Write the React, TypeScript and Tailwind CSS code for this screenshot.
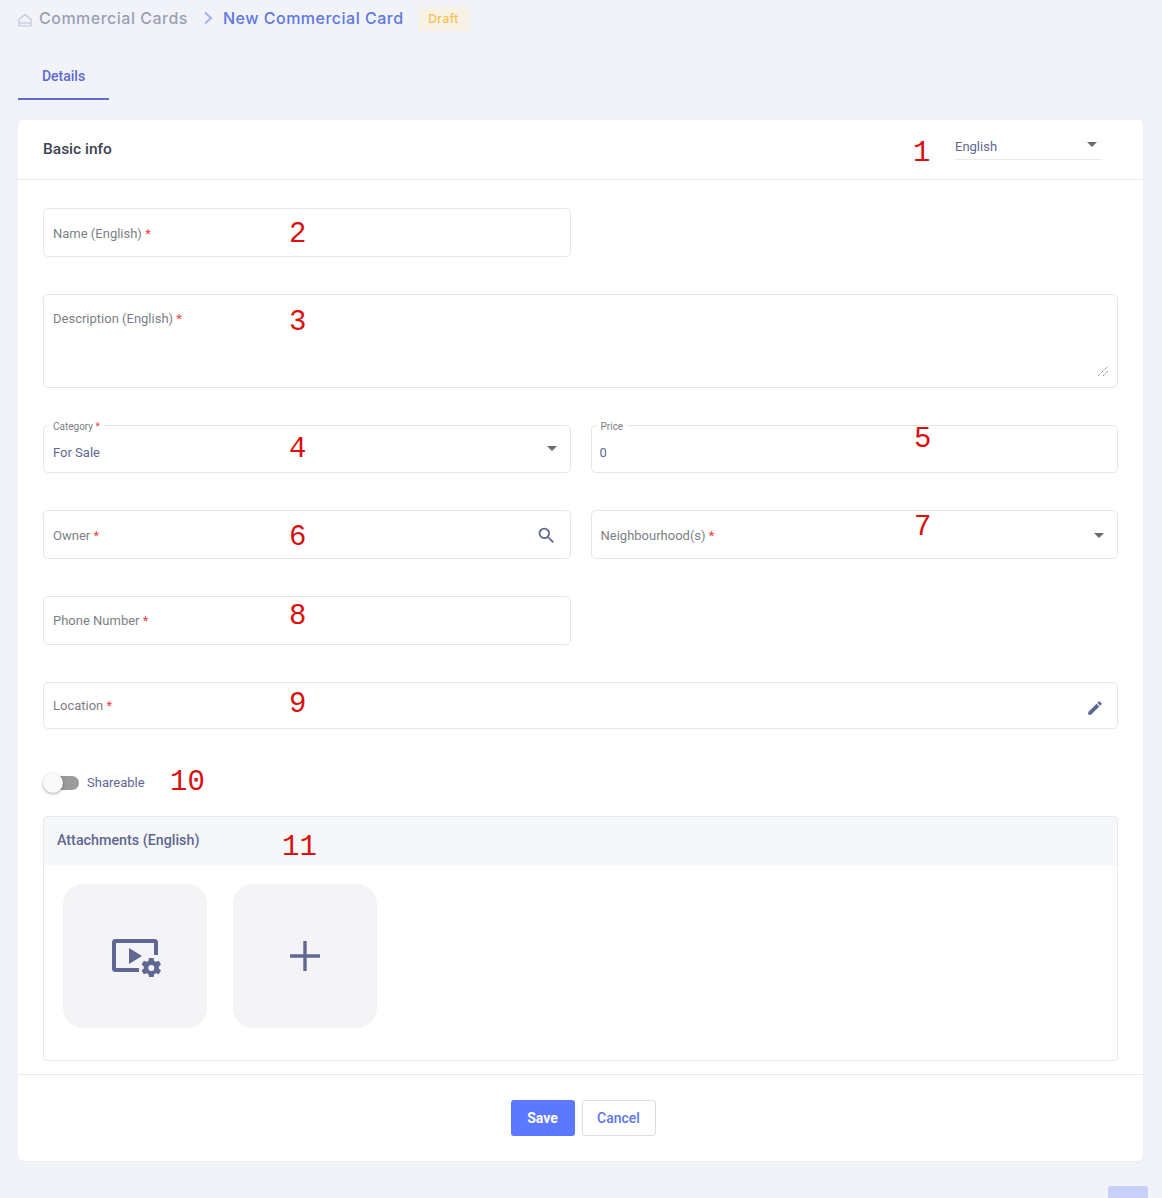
import { ReactNode } from "react";

const roboto = "font-['Roboto',sans-serif]";

function Req() {
  return <span className="text-[#f0413d]"> *</span>;
}

function Note({ children, className }: { children: ReactNode; className: string }) {
  return (
    <span className={`absolute font-['Liberation_Mono',monospace] text-[29px] leading-none text-[#d9100f] ${className}`}>
      {children}
    </span>
  );
}

function Caret({ className }: { className?: string }) {
  return <span className={`border-x-[5.5px] border-t-[5.5px] border-x-transparent border-t-[#6b6b6b] ${className}`} />;
}

function Field({ className, label, children }: { className: string; label: ReactNode; children?: ReactNode }) {
  return (
    <div className={`flex items-center justify-between rounded-[5px] border border-[#e5e6eb] pl-[9px] ${className}`}>
      <span className="text-[13px] text-[#7d7f86]">{label}</span>
      {children}
    </div>
  );
}

function FloatField({ className, label, value, children }: { className: string; label: ReactNode; value: string; children?: ReactNode }) {
  return (
    <div className={`relative flex h-12 items-center justify-between rounded-[5px] border border-[#e5e6eb] pl-[9px] ${className}`}>
      <span className="absolute -top-[6px] left-[5px] bg-white px-1 text-[10px] leading-[13px] text-[#7d7f86]">{label}</span>
      <span className="mt-[7px] text-[13px] text-[#5f6792]">{value}</span>
      {children}
    </div>
  );
}

export default function App() {
  return (
    <div className={`relative h-[1198px] w-full overflow-hidden bg-[#f1f3f9] px-[18px] ${roboto}`}>
      {/* Breadcrumb */}
      <div className="flex h-[38px] items-center font-['Inter',sans-serif] tracking-[0.5px]">
        <svg width="14" height="14" viewBox="0 0 14 14" fill="none" stroke="#c3c8e2" strokeWidth="1.2" className="mt-0.5">
          <path d="M1 6.2 7 1.5l6 4.7V13H1z" />
          <path d="M1 10h12" />
        </svg>
        <span className="mb-0.5 ml-[7px] text-base font-medium text-[#9a9fb4]">Commercial Cards</span>
        <svg width="12" height="14" viewBox="0 0 12 14" fill="none" stroke="#a6b3f2" strokeWidth="2" className="mb-0.5 ml-[15px]">
          <path d="m2 1.5 6 5.5-6 5.5" />
        </svg>
        <span className="mb-0.5 ml-[8px] text-base font-medium text-[#6077e0]">New Commercial Card</span>
        <span className="ml-[14px] flex h-6 w-[52px] items-center justify-center rounded-[3px] bg-[#f8f2e6] text-xs font-medium text-[#f6c050]">Draft</span>
      </div>

      {/* Tabs */}
      <div className="flex h-[62px]">
        <div className="flex w-[91px] items-center justify-center border-b-2 border-[#5c6bd0] pt-4 text-sm font-medium text-[#5c6bd0]">
          Details
        </div>
      </div>

      {/* Card */}
      <div className="mt-5 h-[1041px] w-[1125px] rounded-[5px] bg-white shadow-[0_1px_2px_rgba(60,70,110,0.05)]">
        <div className="flex h-[60px] items-center justify-between border-b border-[#e8e9ed] pl-[25px] pr-[41px]">
          <span className="text-[15.5px] font-medium text-[#3f4254]">Basic info</span>
          <div className="mb-[3px] flex h-6 w-[147px] items-start justify-between border-b border-[#eaebf0] pr-[5px]">
            <span className="mt-px text-[13px] text-[#5f6792]">English</span>
            <Caret className="mt-[6px]" />
          </div>
        </div>

        <div className="px-[25px] pt-7">
          <div className="grid grid-cols-2 gap-x-5">
            <Field className="h-[49px] pt-0.5" label={<>Name (English)<Req /></>} />
          </div>

          <div className="relative mt-[37px] h-[94px] rounded-[5px] border border-[#e5e6eb] pl-[9px] pt-[11px]">
            <span className="text-[13px] text-[#7d7f86]">Description (English)<Req /></span>
            <svg width="12" height="12" viewBox="0 0 12 12" stroke="#666" strokeWidth="1" strokeDasharray="1 1" className="absolute bottom-[10px] right-[8px]">
              <path d="M1 11 11 1M6 11l5-5" />
            </svg>
          </div>

          <div className="mt-[37px] grid grid-cols-2 gap-x-5">
            <FloatField className="pr-[13px]" label={<>Category<Req /></>} value="For Sale">
              <Caret className="mb-0.5" />
            </FloatField>
            <FloatField className="!pl-2" label="Price" value="0" />
          </div>

          <div className="mt-[37px] grid grid-cols-2 gap-x-5">
            <Field className="h-[49px] pr-[13px] pt-0.5" label={<>Owner<Req /></>}>
              <svg width="21" height="21" viewBox="0 0 24 24" fill="#5f6792">
                <path d="M15.5 14h-.79l-.28-.27A6.47 6.47 0 0 0 16 9.5 6.5 6.5 0 1 0 9.5 16c1.61 0 3.09-.59 4.23-1.57l.27.28v.79l5 4.99L20.49 19zm-6 0C7.01 14 5 11.99 5 9.5S7.01 5 9.5 5 14 7.01 14 9.5 11.99 14 9.5 14" />
              </svg>
            </Field>
            <Field className="h-[49px] pr-[13px] pt-0.5" label={<>Neighbourhood(s)<Req /></>}>
              <Caret />
            </Field>
          </div>

          <div className="mt-[37px] grid grid-cols-2 gap-x-5">
            <Field className="h-[49px]" label={<>Phone Number<Req /></>} />
          </div>

          <Field className="mt-[37px] h-[47px] pr-[13px]" label={<>Location<Req /></>}>
            <svg width="18" height="18" viewBox="0 0 24 24" fill="#5f6792" className="mt-1">
              <path d="M3 17.25V21h3.75L17.81 9.94l-3.75-3.75zM20.71 7.04a1 1 0 0 0 0-1.41l-2.34-2.34a1 1 0 0 0-1.41 0l-1.83 1.83 3.75 3.75z" />
            </svg>
          </Field>

          <div className="mt-[44px] flex h-5 items-center pl-0.5">
            <div className="relative h-[14px] w-[34px] rounded-full bg-[#9b9b9b]">
              <span className="absolute -left-[2px] -top-[3px] size-5 rounded-full bg-[#fafafa] shadow-[0_1px_3px_rgba(0,0,0,0.35)]" />
            </div>
            <span className="ml-[8px] text-[13px] text-[#5f6792]">Shareable</span>
          </div>

          <div className="mt-[23px] h-[245px] rounded-[3px] border border-[#e8e9ef]">
            <div className="flex h-12 items-center bg-[#f6f7f9] pl-[13px] text-[14.3px] font-medium text-[#5f6792]">
              Attachments (English)
            </div>
            <div className="flex gap-[26px] pl-[19px] pt-[19px]">
              <div className="flex size-36 items-center justify-center rounded-[20px] bg-[#f4f4f6]">
                <svg width="50" height="42" viewBox="0 0 50 42" fill="#5f6792" className="ml-[3px] mt-[6px]">
                  <path d="M3.5 1h39A3.5 3.5 0 0 1 46 4.5V17h-4V5H4v25h23v4H3.500A3.500 3.500 0 0 1 0 30.500v-26A3.500 3.500 0 0 1 3.500 1z" />
                  <path d="M17 10l13 8-13 8z" />
                  <path fillRule="evenodd" d="M37 20h4.600l.6 2.900 1.800.9 2.800-1 2.200 3.700-2.200 2v2l2.200 2-2.200 3.700-2.800-1-1.800.9-.6 2.900H37l-.6-2.900-1.800-.9-2.800 1-2.200-3.700 2.200-2v-2l-2.200-2 2.200-3.700 2.800 1 1.800-.9zM39.300 27a3 3 0 1 0 0 6 3 3 0 0 0 0-6z" />
                </svg>
              </div>
              <div className="flex size-36 items-center justify-center rounded-[20px] bg-[#f4f4f6]">
                <svg width="30" height="30" viewBox="0 0 30 30" fill="#5f6792">
                  <path d="M13.300 0h3.400v13.300H30v3.400H16.700V30h-3.400V16.700H0v-3.400h13.300z" />
                </svg>
              </div>
            </div>
          </div>
        </div>

        <div className="mt-[13px] flex h-[87px] items-start justify-center gap-[7px] border-t border-[#e8e9ed] pl-[5px] pt-[25px]">
          <div className="flex h-9 w-16 items-center justify-center rounded-[3px] bg-[#5c78ff] pb-px text-sm font-bold text-white">Save</div>
          <div className="flex h-9 w-[74px] items-center justify-center rounded-[3px] border border-[#dcdde3] bg-white pb-px text-sm font-medium text-[#5c78e8]">Cancel</div>
        </div>
      </div>

      {/* Scroll-to-top stub cut off by the window */}
      <div className="absolute left-[1108px] top-[1186px] h-6 w-10 rounded-[3px] bg-[#c7d0f8]" />

      {/* Red annotation numbers */}
      <Note className="left-[913px] top-[139px]">1</Note>
      <Note className="left-[289px] top-[220px]">2</Note>
      <Note className="left-[289px] top-[308px]">3</Note>
      <Note className="left-[289px] top-[435px]">4</Note>
      <Note className="left-[914px] top-[425px]">5</Note>
      <Note className="left-[289px] top-[523px]">6</Note>
      <Note className="left-[914px] top-[513px]">7</Note>
      <Note className="left-[289px] top-[602px]">8</Note>
      <Note className="left-[289px] top-[690px]">9</Note>
      <Note className="left-[170px] top-[768px]">10</Note>
      <Note className="left-[282px] top-[833px]">11</Note>
    </div>
  );
}
